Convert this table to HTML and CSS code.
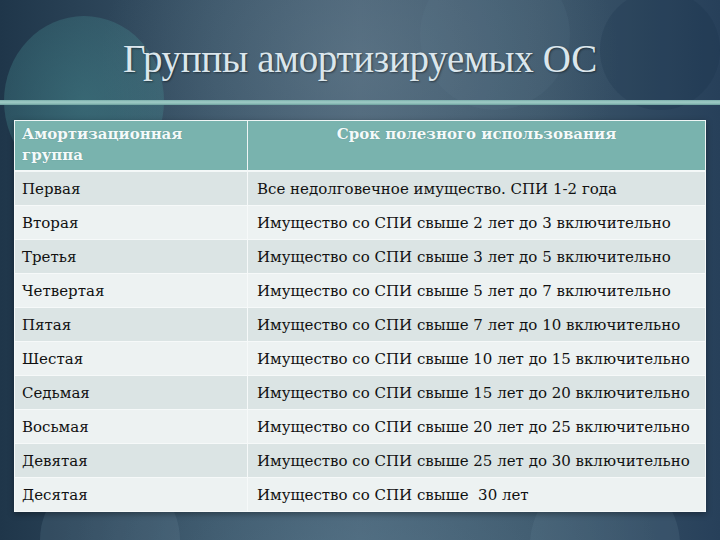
FILE: index.html
```html
<!DOCTYPE html>
<html lang="ru">
<head>
<meta charset="utf-8">
<title>Группы амортизируемых ОС</title>
<link rel="stylesheet" href="styles.css">
</head>
<body>
<div class="slide">
  <div class="bokeh b1"></div>
  <div class="bokeh b2"></div>
  <div class="bokeh b3"></div>
  <div class="bokeh b4"></div>
  <div class="bokeh b5"></div>
  <div class="content">
    <h1 class="title">Группы амортизируемых ОС</h1>
    <div class="rule"></div>
    <table class="grid">
      <thead>
        <tr>
          <th class="c1">Амортизационная группа</th>
          <th class="c2">Срок полезного использования</th>
        </tr>
      </thead>
      <tbody>
        <tr><td>Первая</td><td>Все недолговечное имущество. СПИ 1-2 года</td></tr>
        <tr><td>Вторая</td><td>Имущество со СПИ свыше 2 лет до 3 включительно</td></tr>
        <tr><td>Третья</td><td>Имущество со СПИ свыше 3 лет до 5 включительно</td></tr>
        <tr><td>Четвертая</td><td>Имущество со СПИ свыше 5 лет до 7 включительно</td></tr>
        <tr><td>Пятая</td><td>Имущество со СПИ свыше 7 лет до 10 включительно</td></tr>
        <tr><td>Шестая</td><td>Имущество со СПИ свыше 10 лет до 15 включительно</td></tr>
        <tr><td>Седьмая</td><td>Имущество со СПИ свыше 15 лет до 20 включительно</td></tr>
        <tr><td>Восьмая</td><td>Имущество со СПИ свыше 20 лет до 25 включительно</td></tr>
        <tr><td>Девятая</td><td>Имущество со СПИ свыше 25 лет до 30 включительно</td></tr>
        <tr><td>Десятая</td><td>Имущество со СПИ свыше &nbsp;30 лет</td></tr>
      </tbody>
    </table>
  </div>
</div>
</body>
</html>
```
FILE: styles.css
```css
html, body {
  margin: 0;
  padding: 0;
}
body {
  width: 720px;
  height: 540px;
  overflow: hidden;
  background: #2a4458;
  font-family: "DejaVu Serif", "Liberation Serif", serif;
}
.slide {
  position: relative;
  width: 720px;
  height: 540px;
  overflow: hidden;
  background:
    radial-gradient(ellipse 260px 200px at 360px 60px, rgba(110,135,150,0.4), rgba(110,135,150,0) 100%),
    radial-gradient(ellipse 300px 160px at 360px 560px, rgba(90,125,145,0.5), rgba(90,125,145,0) 100%),
    linear-gradient(90deg, #1f364a 0%, #3a5468 30%, #4a6276 50%, #3c566a 75%, #27405a 100%);
}
.bokeh {
  position: absolute;
  border-radius: 50%;
}
.b1 {
  left: 4px;
  top: 16px;
  width: 160px;
  height: 170px;
  background: radial-gradient(circle at 50% 50%, rgba(70,140,145,0.5), rgba(70,140,145,0.32) 70%, rgba(70,140,145,0.15) 100%);
}
.b2 {
  left: 420px;
  top: -40px;
  width: 150px;
  height: 150px;
  background: rgba(110,140,155,0.1);
}
.b3 {
  left: 600px;
  top: -10px;
  width: 120px;
  height: 120px;
  background: rgba(20,45,70,0.2);
}
.b4 {
  left: 40px;
  top: 470px;
  width: 140px;
  height: 140px;
  background: rgba(110,140,160,0.2);
}
.b5 {
  left: 530px;
  top: 470px;
  width: 150px;
  height: 150px;
  background: rgba(100,130,150,0.2);
}
.content {
  position: relative;
}
.title {
  margin: 0;
  padding-top: 34px;
  height: 50px;
  line-height: 50px;
  text-align: center;
  font-family: "Liberation Serif", "Times New Roman", serif;
  font-weight: normal;
  font-size: 39px;
  color: #dbe6ec;
  text-shadow: 1px 1px 2px rgba(0,0,0,0.45);
  letter-spacing: -0.3px;
}
.rule {
  margin-top: 16px;
  height: 5px;
  background: linear-gradient(180deg, #7aaeab 0%, #9fcbc6 40%, #8dbdb8 70%, #6b9f9d 100%);
}
.grid {
  margin: 15px 0 0 14px;
  width: 692px;
  border-collapse: collapse;
  box-shadow: 0 2px 6px rgba(0,0,0,0.35);
}
.grid th {
  font-family: "DejaVu Serif", "Liberation Serif", serif;
  background: #79b3ae;
  color: #f4fafa;
  font-weight: bold;
  font-size: 15px;
  line-height: 21px;
  height: 46px;
  padding: 3px 7px 0 7px;
  vertical-align: top;
  border: 1px solid #eef5f5;
  border-bottom: 2px solid #f4f8f8;
  text-shadow: 0 0 1px rgba(40,80,80,0.4);
}
.grid th.c1 {
  width: 218px;
  text-align: left;
}
.grid th.c2 {
  text-align: center;
}
.grid td {
  font-family: "DejaVu Serif", "Liberation Serif", serif;
  font-size: 15px;
  color: #111;
  height: 33px;
  padding: 0 7px;
  border: 1px solid #f6f9f9;
  white-space: nowrap;
}
.grid td + td {
  padding-left: 9px;
}
.grid tbody tr:nth-child(odd) td {
  background: #dbe4e4;
}
.grid tbody tr:nth-child(even) td {
  background: #edf2f2;
}
```
